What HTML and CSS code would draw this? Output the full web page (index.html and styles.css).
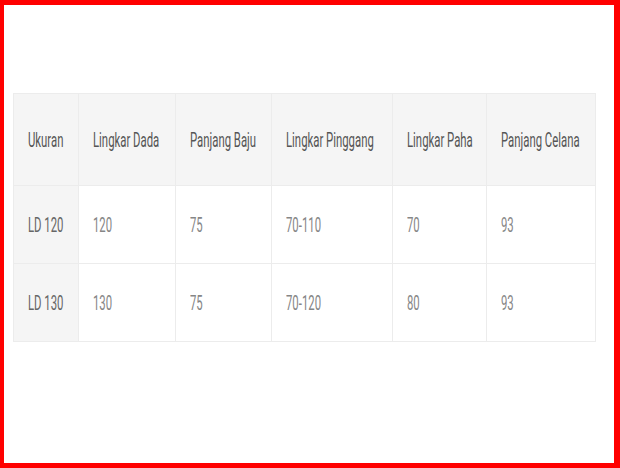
FILE: index.html
```html
<!DOCTYPE html>
<html lang="id">
<head>
<meta charset="utf-8">
<title>Ukuran</title>
<link rel="stylesheet" href="styles.css">
</head>
<body>
<main class="frame">
  <table class="size-table">
    <colgroup>
      <col class="c1"><col class="c2"><col class="c3"><col class="c4"><col class="c5"><col class="c6">
    </colgroup>
    <thead>
      <tr>
        <th><span class="t">Ukuran</span></th>
        <th><span class="t">Lingkar Dada</span></th>
        <th><span class="t">Panjang Baju</span></th>
        <th><span class="t">Lingkar Pinggang</span></th>
        <th><span class="t">Lingkar Paha</span></th>
        <th><span class="t">Panjang Celana</span></th>
      </tr>
    </thead>
    <tbody>
      <tr>
        <th class="rowhead"><span class="t">LD 120</span></th>
        <td><span class="t">120</span></td>
        <td><span class="t">75</span></td>
        <td><span class="t">70-110</span></td>
        <td><span class="t">70</span></td>
        <td><span class="t">93</span></td>
      </tr>
      <tr>
        <th class="rowhead"><span class="t">LD 130</span></th>
        <td><span class="t">130</span></td>
        <td><span class="t">75</span></td>
        <td><span class="t">70-120</span></td>
        <td><span class="t">80</span></td>
        <td><span class="t">93</span></td>
      </tr>
    </tbody>
  </table>
</main>
</body>
</html>
```

FILE: styles.css
```css
html, body {
  margin: 0;
  padding: 0;
}
body {
  width: 620px;
  height: 468px;
  box-sizing: border-box;
  border-style: solid;
  border-color: #ff0000;
  border-width: 5px 6px 5px 4px;
  background: #ffffff;
  font-family: Roboto, "Liberation Sans", sans-serif;
  overflow: hidden;
}
.frame {
  padding: 88px 19px 0 9px;
}
.size-table {
  width: 582px;
  table-layout: fixed;
  border-collapse: collapse;
  font-size: 21px;
}
.c1 { width: 65px; }
.c2 { width: 97px; }
.c3 { width: 96px; }
.c4 { width: 121px; }
.c5 { width: 94px; }
.c6 { width: 109px; }
.size-table th,
.size-table td {
  border: 1px solid #ececec;
  padding: 0 0 0 14px;
  text-align: left;
  white-space: nowrap;
  overflow: visible;
  font-weight: 400;
  vertical-align: middle;
}
.size-table thead tr { height: 92px; }
.size-table tbody tr { height: 78px; }
.size-table thead th {
  background: #f5f5f5;
  color: #555555;
}
.size-table .rowhead {
  background: #f5f5f5;
  color: #666666;
}
.size-table td {
  color: #868686;
}
.t {
  display: inline-block;
  transform: scaleX(0.54);
  transform-origin: left center;
}
```
